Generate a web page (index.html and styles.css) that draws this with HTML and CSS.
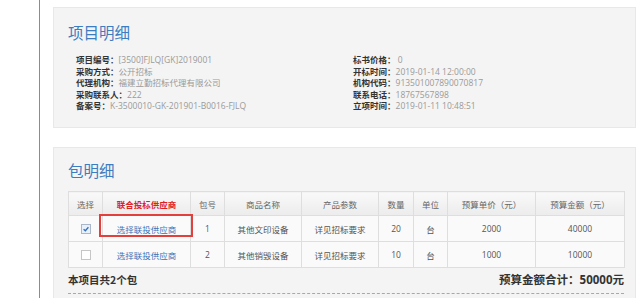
FILE: index.html
```html
<!DOCTYPE html>
<html lang="zh">
<head>
<meta charset="utf-8">
<link rel="stylesheet" href="styles.css">
</head>
<body>
<div class="page">
  <section class="panel panel-project">
    <h2 class="panel-title">项目明细</h2>
    <div class="info">
      <ul class="info-col">
        <li><b>项目编号：</b><span>[3500]FJLQ[GK]2019001</span></li>
        <li><b>采购方式：</b><span>公开招标</span></li>
        <li><b>代理机构：</b><span>福建立勤招标代理有限公司</span></li>
        <li><b>采购联系人：</b><span>222</span></li>
        <li><b>备案号：</b><span>K-3500010-GK-201901-B0016-FJLQ</span></li>
      </ul>
      <ul class="info-col">
        <li><b>标书价格：</b><span>&nbsp;0</span></li>
        <li><b>开标时间：</b><span>2019-01-14 12:00:00</span></li>
        <li><b>机构代码：</b><span>913501007890070817</span></li>
        <li><b>联系电话：</b><span>18767567898</span></li>
        <li><b>立项时间：</b><span>2019-01-11 10:48:51</span></li>
      </ul>
    </div>
  </section>

  <section class="panel panel-pack">
    <h2 class="panel-title">包明细</h2>
    <table class="pack-table">
      <colgroup>
        <col style="width:34px"><col style="width:88px"><col style="width:34px"><col style="width:77px"><col style="width:77px"><col style="width:35px"><col style="width:34px"><col style="width:88px"><col style="width:89px">
      </colgroup>
      <thead>
        <tr>
          <th>选择</th>
          <th class="th-red">联合投标供应商</th>
          <th>包号</th>
          <th>商品名称</th>
          <th>产品参数</th>
          <th>数量</th>
          <th>单位</th>
          <th>预算单价（元）</th>
          <th>预算金额（元）</th>
        </tr>
      </thead>
      <tbody>
        <tr>
          <td><span class="chk chk-on"><svg viewBox="0 0 10 10" width="8" height="8"><path d="M2 5.2 L4.2 7.2 L8 2.8" fill="none" stroke="#2f6fc0" stroke-width="1.6"/></svg></span></td>
          <td class="cell-link"><a class="link">选择联投供应商</a><span class="mark"></span></td>
          <td>1</td>
          <td>其他文印设备</td>
          <td>详见招标要求</td>
          <td>20</td>
          <td>台</td>
          <td>2000</td>
          <td>40000</td>
        </tr>
        <tr>
          <td><span class="chk"></span></td>
          <td class="cell-link"><a class="link">选择联投供应商</a></td>
          <td>2</td>
          <td>其他销毁设备</td>
          <td>详见招标要求</td>
          <td>10</td>
          <td>台</td>
          <td>1000</td>
          <td>10000</td>
        </tr>
      </tbody>
    </table>
    <div class="summary">
      <span class="sum-left">本项目共2个包</span>
      <span class="sum-right">预算金额合计：50000元</span>
    </div>
  </section>
</div>
</body>
</html>
```

FILE: styles.css
```css
html, body {
  margin: 0;
  padding: 0;
  background: #fff;
  font-family: "Open Sans", "Noto Sans CJK SC", sans-serif;
  overflow: hidden;
}

.page {
  margin-left: 39px;
  border-left: 1px solid #8c8c8c;
  padding: 7px 0 0 13px;
  height: 298px;
  box-sizing: border-box;
}

.panel {
  width: 583px;
  box-sizing: border-box;
  background: #f4f4f4;
  border: 1px solid #e8e8e8;
  padding: 0 13px 0 14px;
}

.panel-project {
  height: 121px;
  padding-top: 14px;
}

.panel-pack {
  margin-top: 19px;
  height: 160px;
  padding-top: 12px;
}

.panel-title {
  margin: 0;
  font-family: "Noto Sans CJK SC", sans-serif;
  font-weight: normal;
  font-size: 15.5px;
  line-height: 20px;
  color: #3c7cc0;
}

.info {
  display: flex;
  padding-left: 8px;
  margin-top: 12px;
}

.info-col {
  list-style: none;
  margin: 0;
  padding: 0;
  font-size: 8.5px;
  line-height: 10.5px;
  white-space: nowrap;
}

.info-col:first-child {
  width: 277px;
}

.info-col b {
  color: #333;
  font-family: "Noto Sans CJK SC", sans-serif;
  font-weight: bold;
}

.info-col span {
  color: #9a9a9a;
}

.pack-table {
  margin-top: 11px;
  border-collapse: collapse;
  table-layout: fixed;
  width: 556px;
  font-size: 8.5px;
  color: #555;
  text-align: center;
}

.pack-table th,
.pack-table td {
  border: 1px solid #dedede;
  padding: 0;
}

.pack-table th {
  height: 23px;
  font-weight: normal;
  color: #666;
  background: linear-gradient(#f9f9f9, #ececec);
}

.pack-table th.th-red {
  color: #e0201f;
  font-weight: bold;
}

.pack-table td {
  height: 25px;
  background: #fafafa;
}

.cell-link {
  position: relative;
}

.link {
  color: #3b73b6;
}

.mark {
  position: absolute;
  left: -4px;
  top: -2px;
  width: 94px;
  height: 23px;
  box-sizing: border-box;
  border: 2px solid #e2403c;
}

.chk {
  display: inline-flex;
  align-items: center;
  justify-content: center;
  width: 10px;
  height: 10px;
  box-sizing: border-box;
  border: 1px solid #c6c6c6;
  background: #fff;
  vertical-align: middle;
}

.chk-on {
  background: #e8f0fa;
  border-color: #a9b7c8;
}

.summary {
  display: flex;
  justify-content: space-between;
  align-items: flex-start;
  width: 556px;
  height: 20px;
  padding-top: 5px;
  line-height: 14px;
  border-bottom: 1px dashed #a8a8a8;
  font-family: "Noto Sans CJK SC", sans-serif;
  font-weight: bold;
  color: #333;
}

.sum-left {
  font-size: 10.5px;
}

.sum-right {
  font-size: 11.5px;
  font-family: "Open Sans", "Noto Sans CJK SC", sans-serif;
}
```
